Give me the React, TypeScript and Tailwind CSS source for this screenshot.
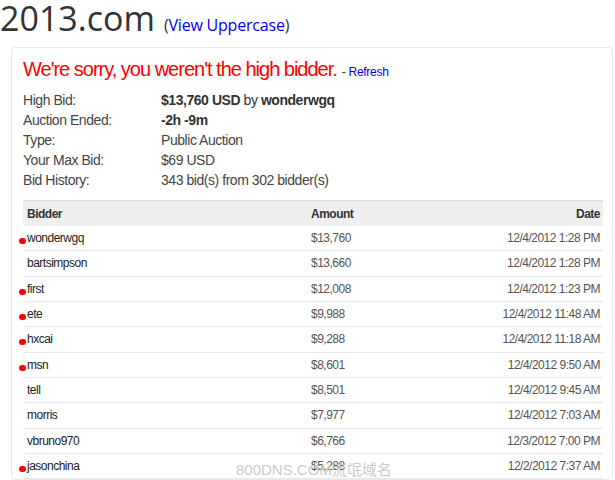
import React from 'react';

const bids = [
  { name: 'wonderwgq', amount: '$13,760', date: '12/4/2012 1:28 PM', mark: true },
  { name: 'bartsimpson', amount: '$13,660', date: '12/4/2012 1:28 PM', mark: false },
  { name: 'first', amount: '$12,008', date: '12/4/2012 1:23 PM', mark: true },
  { name: 'ete', amount: '$9,988', date: '12/4/2012 11:48 AM', mark: true },
  { name: 'hxcai', amount: '$9,288', date: '12/4/2012 11:18 AM', mark: true },
  { name: 'msn', amount: '$8,601', date: '12/4/2012 9:50 AM', mark: true },
  { name: 'tell', amount: '$8,501', date: '12/4/2012 9:45 AM', mark: false },
  { name: 'morris', amount: '$7,977', date: '12/4/2012 7:03 AM', mark: false },
  { name: 'vbruno970', amount: '$6,766', date: '12/3/2012 7:00 PM', mark: false },
  { name: 'jasonchina', amount: '$5,288', date: '12/2/2012 7:37 AM', mark: true },
];

export default function App() {
  return (
    <div className="relative w-[615px] h-[480px] overflow-hidden bg-white font-['Liberation_Sans',Arial,sans-serif] text-[#333]">
      {/* Domain title */}
      <div className="flex items-baseline h-[47px]">
        <span className="font-['Open_Sans',sans-serif] text-[34px] leading-[37px] text-[#333]">2013.com</span>
        <span className="ml-[9px] font-['Open_Sans',sans-serif] text-[16px] tracking-[-0.2px] text-[#333]">
          (<a className="text-[#0000ee]">View Uppercase</a>)
        </span>
      </div>

      {/* Auction card */}
      <div className="ml-[11px] mr-[2px] border border-[#e8e8e8] rounded-[4px] pl-[11px] pr-[9px] pt-[7px]">
        <div className="flex items-baseline">
          <span className="text-[20px] leading-[28px] tracking-[-1px] text-[#ff0000]">We're sorry, you weren't the high bidder.</span>
          <span className="ml-[5px] text-[12px] tracking-[-0.3px] text-[#0000ee]">
            <span className="text-[#333]">-</span> Refresh
          </span>
        </div>

        <div className="mt-[7px] text-[14px] leading-[20px] tracking-[-0.45px]">
          <div className="flex">
            <span className="w-[138px] text-[#444]">High Bid:</span>
            <span><b>$13,760 USD</b> by <b>wonderwgq</b></span>
          </div>
          <div className="flex">
            <span className="w-[138px] text-[#444]">Auction Ended:</span>
            <b>-2h -9m</b>
          </div>
          <div className="flex">
            <span className="w-[138px] text-[#444]">Type:</span>
            <span className="text-[#444]">Public Auction</span>
          </div>
          <div className="flex">
            <span className="w-[138px] text-[#444]">Your Max Bid:</span>
            <span className="text-[#444]">$69 USD</span>
          </div>
          <div className="flex">
            <span className="w-[138px] text-[#444]">Bid History:</span>
            <span className="text-[#444]">343 bid(s) from 302 bidder(s)</span>
          </div>
        </div>

        {/* Bid table */}
        <div className="mt-[10px] text-[12px] tracking-[-0.5px]">
          <div className="flex items-center h-[26px] bg-[#efefef] border-t border-[#dcdcdc] pl-[4px] pr-[3px] font-bold text-[#333]">
            <span className="w-[284px]">Bidder</span>
            <span className="flex-1">Amount</span>
            <span>Date</span>
          </div>
          {bids.map((b) => (
            <div
              key={b.name}
              className="relative flex items-center h-[25.33px] border-b border-[#e9e9e9] pl-[4px] pr-[3px]"
            >
              {b.mark && (
                <span className="absolute left-[-4px] top-[12px] w-[7px] h-[6px] rounded-full bg-[#ff0000]" />
              )}
              <span className="w-[284px] text-[#222]">{b.name}</span>
              <span className="flex-1 text-[#555]">{b.amount}</span>
              <span className="text-[#555]">{b.date}</span>
            </div>
          ))}
        </div>
      </div>

      {/* Watermark */}
      <span className="absolute left-[236px] top-[461px] font-['Liberation_Sans','Noto_Sans_CJK_SC',sans-serif] text-[15px] leading-[18px] text-[#cacaca]">
        800DNS.COM流氓域名
      </span>
    </div>
  );
}
